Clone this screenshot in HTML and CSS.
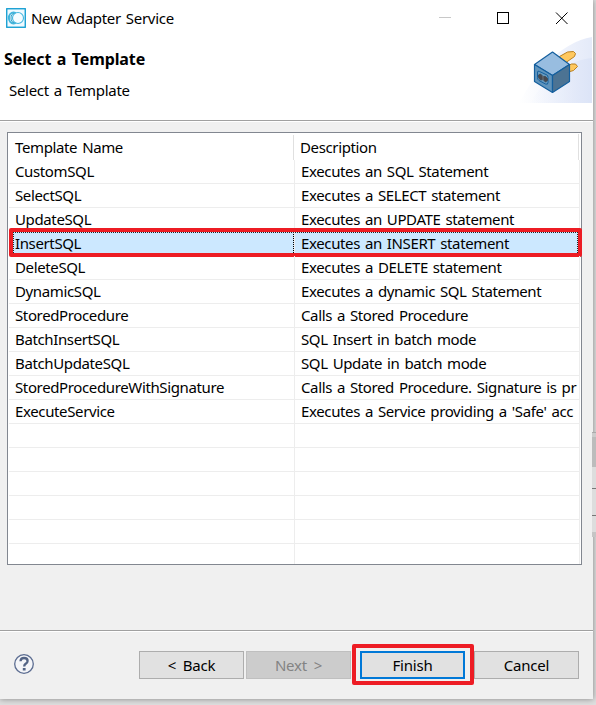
FILE: index.html
```html
<!DOCTYPE html>
<html lang="en">
<head>
<meta charset="utf-8">
<title>New Adapter Service</title>
<link rel="stylesheet" href="styles.css">
</head>
<body>
<div class="behind"></div>
<main class="dialog">
  <header class="titlebar">
    <svg class="app-icon" width="20" height="20" viewBox="0 0 20 20" fill="none">
      <rect x=".75" y=".75" width="18.5" height="18.5" fill="#f0faff" stroke="#0899d0" stroke-width="1.3"/>
      <ellipse cx="7.5" cy="10" rx="4.6" ry="5.4" stroke="#42b5dc" stroke-width="2"/>
      <ellipse cx="8.5" cy="10" rx="3.5" ry="4.5" stroke="#2096be" stroke-width=".9"/>
      <circle cx="12" cy="10" r="5.5" fill="#f5fcff" stroke="#45b7df" stroke-width="1.1"/>
    </svg>
    <span class="title">New Adapter Service</span>
    <svg class="controls" width="132" height="14" viewBox="0 0 132 14" fill="none" shape-rendering="crispEdges">
      <path d="M0 5.5h12" stroke="#c8c8c8"/>
      <rect x="58.5" y=".5" width="11" height="11" stroke="#000"/>
      <path d="M117 .5l11.500 11.500M128.500 .5L117 12" stroke="#000" shape-rendering="auto"/>
    </svg>
  </header>
  <section class="banner">
    <div class="heading">
      <h1>Select a Template</h1>
      <p>Select a Template</p>
    </div>
    <svg class="plug" width="76" height="67" viewBox="0 0 76 67">
      <defs>
        <linearGradient id="sweep"><stop offset="0" stop-color="#fff"/><stop offset="1" stop-color="#e4eaf9"/></linearGradient>
        <linearGradient id="lower"><stop offset="0" stop-color="#e9eefb" stop-opacity="0"/><stop offset="1" stop-color="#dce4f7"/></linearGradient>
      </defs>
      <path d="M3 67C22 32 45 7 76 1V67Z" fill="url(#sweep)"/>
      <path d="M14 67C32 37 55 24 76 22V67Z" fill="url(#lower)"/>
      <g transform="translate(.5 .5)">
        <g stroke="#ba8020" stroke-linejoin="round" fill="#ffc85e">
          <path d="M43 20L51 15.500L57 15L59 17L58 20L48 27Z"/>
          <path d="M48 31L55 27.500L59 27.500L61 30L57 34L50 36Z"/>
        </g>
        <g stroke="#145f9e" stroke-width="1.2" stroke-linejoin="round">
          <path d="M18 28L36 15.500L53 28L36 39Z" fill="#98bde0"/>
          <path d="M18 28L36 39V56L18 45Z" fill="#6094bc"/>
          <path d="M53 28L36 39V56L53 45Z" fill="#4c7393"/>
        </g>
        <path d="M21 35.500Q21 34 23 35L30.500 38.500Q31.500 39 31.500 41V46Q31.500 48.500 29 47.500L22.500 44Q21 43 21 41Z" fill="#6699bd" stroke="#145f9e"/>
        <path d="M22 38.500L24 37.500L26.500 40L29 40L31 42V44L29 45.500L26.500 43L24 43.500L22 41Z" fill="#47494f" stroke="#3b4754" stroke-width=".8"/>
        <path d="M26.500 39.500v4" stroke="#7b7f84" stroke-width=".8"/>
      </g>
    </svg>
  </section>
  <section class="content">
    <div class="table">
      <div class="row head"><span>Template Name</span><span>Description</span></div>
      <div class="row"><span>CustomSQL</span><span>Executes an SQL Statement</span></div>
      <div class="row"><span>SelectSQL</span><span>Executes a SELECT statement</span></div>
      <div class="row"><span>UpdateSQL</span><span>Executes an UPDATE statement</span></div>
      <div class="row selected"><span>InsertSQL</span><span>Executes an INSERT statement</span><i class="mark"></i></div>
      <div class="row"><span>DeleteSQL</span><span>Executes a DELETE statement</span></div>
      <div class="row"><span>DynamicSQL</span><span>Executes a dynamic SQL Statement</span></div>
      <div class="row"><span>StoredProcedure</span><span>Calls a Stored Procedure</span></div>
      <div class="row"><span>BatchInsertSQL</span><span>SQL Insert in batch mode</span></div>
      <div class="row"><span>BatchUpdateSQL</span><span>SQL Update in batch mode</span></div>
      <div class="row"><span>StoredProcedureWithSignature</span><span>Calls a Stored Procedure. Signature is pr</span></div>
      <div class="row"><span>ExecuteService</span><span>Executes a Service providing a 'Safe' acc</span></div>
      <div class="row"><span></span><span></span></div>
      <div class="row"><span></span><span></span></div>
      <div class="row"><span></span><span></span></div>
      <div class="row"><span></span><span></span></div>
      <div class="row"><span></span><span></span></div>
      <div class="row last"><span></span><span></span></div>
    </div>
  </section>
  <footer class="footer">
    <svg class="help" width="22" height="22" viewBox="0 0 22 22" fill="none">
      <circle cx="11" cy="11" r="9.300" fill="#f4f5f8" stroke="#5c6d91" stroke-width="1.300"/>
      <path d="M7.500 8.200Q7.700 5 11 5Q14.600 5 14.600 8Q14.600 9.500 12.700 10.800Q11.200 11.800 11.200 13.500" stroke="#536485" stroke-width="2.300"/>
      <path d="M9.800 15h2.800v2.500H9.800z" fill="#536485"/>
    </svg>
    <div class="buttons">
      <button class="back">&lt; Back</button>
      <button class="next" disabled>Next &gt;</button>
      <div class="finish-wrap"><button class="finish">Finish</button><i class="mark"></i></div>
      <button class="cancel">Cancel</button>
    </div>
  </footer>
</main>
</body>
</html>
```
FILE: styles.css
```css
* { box-sizing: border-box; }
body {
  margin: 0;
  width: 596px;
  height: 705px;
  overflow: hidden;
  position: relative;
  background: #dedede;
  color: #000;
  font: 15px/24px "Noto Sans", "Open Sans", sans-serif;
  letter-spacing: -0.37px;
  word-spacing: 1.4px;
}
.behind {
  position: absolute;
  left: 592px;
  top: 432px;
  width: 4px;
  height: 105px;
  background: linear-gradient(#aaa 0 1px, #ccc 1px 5px, #bcbcbc 5px 35px, #ddd 35px 56px, #777 56px 57px, #ddd 57px 83px, #777 83px 84px, #ddd 84px 100px, #c5c5c5 100px);
}
.dialog {
  width: 593px;
  height: 699px;
  display: flex;
  flex-direction: column;
  background: #f0f0f0;
  box-shadow: 0 0 6px #0006;
}
.titlebar {
  height: 36px;
  display: flex;
  align-items: center;
  padding-left: 6px;
  background: #fff;
}
.title { margin-left: 5px; width: 408px; letter-spacing: -0.3px; }
.controls { margin-top: 2px; }
.banner {
  height: 84px;
  display: flex;
  justify-content: space-between;
  background: #fff;
}
.heading { padding: 11px 0 0 4px; }
h1 { margin: 0; font-size: 16px; line-height: 24px; font-weight: 700; letter-spacing: -0.1px; }
p { margin: 7px 0 0 5px; letter-spacing: -0.3px; }
.plug { display: block; margin-right: 1px; }
.content {
  height: 510px;
  padding: 11px 0 0 7px;
  border-top: 1px solid #a0a0a0;
  box-shadow: inset 0 1px #fff;
}
.table {
  width: 575px;
  height: 433px;
  padding: 1px 1px 0;
  border: 1px solid #828790;
  background: #fff;
}
.row {
  position: relative;
  width: 571px;
  height: 24px;
  display: grid;
  grid-template-columns: 286px 284px;
  border-bottom: 1px solid #ededed;
  border-right: 1px solid #ededed;
  line-height: 22px;
  white-space: nowrap;
}
.row span {
  padding-left: 6px;
  border-right: 1px solid #ededed;
}
.row span:nth-child(2) { border-right: 0; }
.row.head {
  width: 570px;
  height: 26px;
  padding-top: 1px;
  border-bottom: 0;
  grid-template-columns: 285px 284px;
  border-right-color: #e0e0e0;
  line-height: 24px;
}
.row.head span:first-child { border-right-color: #e0e0e0; }
.row.selected { background: #cce8ff; }
.row.selected span:first-child { position: relative; }
.row.selected span:first-child::after { content: ""; position: absolute; top: 0; bottom: 0; right: 0; border-right: 1px dotted #000; }
.row.last { border-bottom: 0; height: 20px; }
.mark { position: absolute; border: 4px solid #ed1c24; border-radius: 2px; }
.row .mark { left: 0; top: -4px; width: 573px; height: 29px; }
.row .mark::after { content: ""; position: absolute; inset: 0; border: 1px dotted #222; border-bottom: 0; }
.footer {
  height: 69px;
  padding: 20px 14px 0;
  border-top: 1px solid #a0a0a0;
  box-shadow: inset 0 1px #fff;
  display: flex;
  justify-content: space-between;
}
.help { margin: 2px 0 0 -1px; }
.buttons { display: flex; gap: 2px; }
button {
  width: 105px;
  height: 28px;
  padding: 0;
  border: 1px solid #adadad;
  background: #e1e1e1;
  color: #000;
  font: inherit;
  letter-spacing: -0.2px;
  word-spacing: 3px;
}
button:disabled { background: #ccc; border-color: #bfbfbf; color: #838383; }
.finish-wrap { position: relative; margin: 0 7px; }
.finish { border: 2px solid #0078d7; }
.finish-wrap .mark { left: -8px; top: -7px; width: 122px; height: 41px; }
```
